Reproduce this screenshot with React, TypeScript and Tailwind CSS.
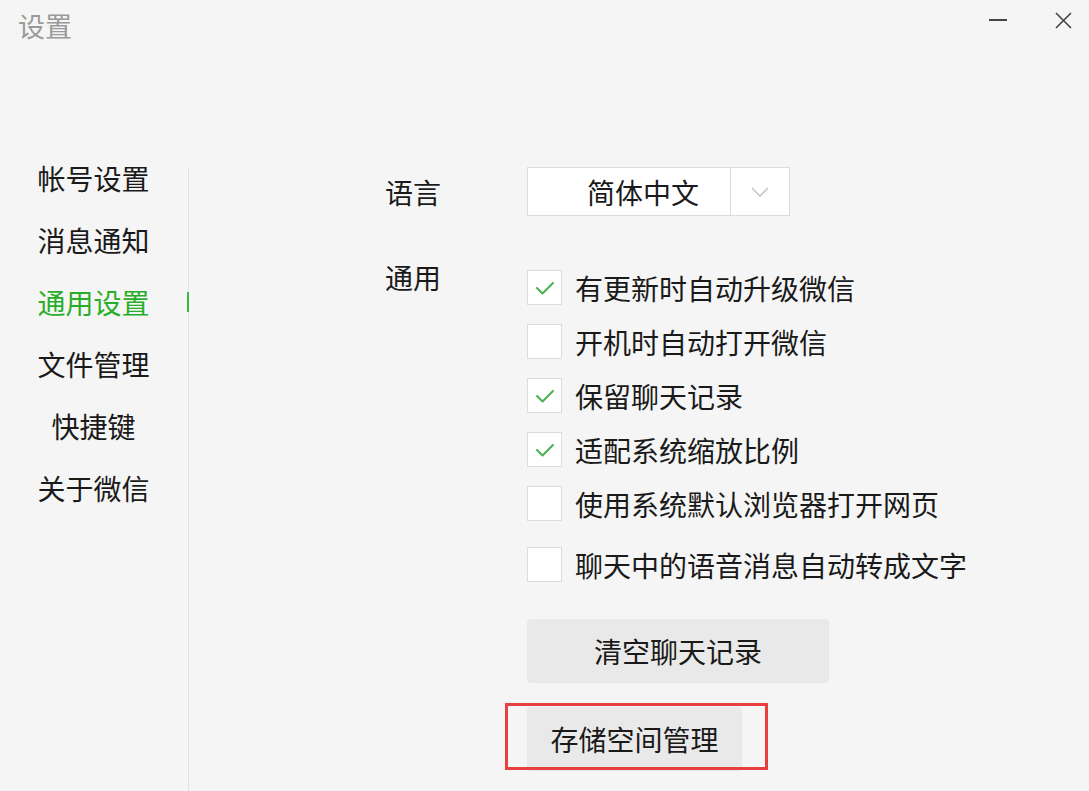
import { useState } from 'react';

const menu = ['帐号设置', '消息通知', '通用设置', '文件管理', '快捷键', '关于微信'];

const options = [
  { label: '有更新时自动升级微信', checked: true },
  { label: '开机时自动打开微信', checked: false },
  { label: '保留聊天记录', checked: true },
  { label: '适配系统缩放比例', checked: true },
  { label: '使用系统默认浏览器打开网页', checked: false },
  { label: '聊天中的语音消息自动转成文字', checked: false },
];

function Check({ on }: { on: boolean }) {
  return (
    <div className="w-[35px] h-[35px] shrink-0 bg-white border border-[#dcdcdc] flex items-center justify-center">
      {on && (
        <svg width="22" height="18" viewBox="0 0 22 18" fill="none">
          <path d="M3 9l5.5 5.5L19 4" stroke="#4caf50" strokeWidth="2" strokeLinecap="round" strokeLinejoin="round" />
        </svg>
      )}
    </div>
  );
}

export default function App() {
  const [active, setActive] = useState(2);
  const [opts, setOpts] = useState(options);

  const toggle = (i: number) => {
    setOpts(opts.map((o, j) => (j === i ? { ...o, checked: !o.checked } : o)));
  };

  return (
    <div
      className="w-[1089px] h-[791px] bg-[#f5f5f5] flex flex-col overflow-hidden text-[#1a1a1a]"
      style={{ fontFamily: '"Microsoft YaHei", "Noto Sans CJK SC", sans-serif' }}
    >
      {/* 标题栏 */}
      <div className="h-[149px] flex items-start justify-between shrink-0">
        <div className="pl-[18px] pt-[11px] text-[27px] leading-[30px] text-[#9a9a9a]">设置</div>
        <div className="flex items-start">
          <div className="w-[18px] h-[2px] bg-[#444] mt-[19px] mr-[48px]" />
          <svg className="mt-[12px] mr-[17px]" width="17" height="17" viewBox="0 0 17 17">
            <path d="M1 1l15 15M16 1L1 16" stroke="#444" strokeWidth="1.6" />
          </svg>
        </div>
      </div>

      <div className="flex flex-1 min-h-0">
        {/* 左侧菜单 */}
        <div className="w-[187px] shrink-0 flex flex-col -mt-[2px]">
          {menu.map((m, i) => (
            <div
              key={m}
              onClick={() => setActive(i)}
              className={`h-[62px] flex items-center justify-center text-[28px] leading-[30px] cursor-pointer ${
                i === active ? 'text-[#2aae2a]' : 'text-[#1a1a1a]'
              }`}
            >
              {m}
            </div>
          ))}
        </div>
        <div className="w-[2px] shrink-0 flex flex-col pt-[19px]">
          <div className="w-px h-[124px] bg-[#e2e2e2] ml-px" />
          <div className="w-[2px] h-[20px] bg-[#3bb73b]" />
          <div className="w-px flex-1 bg-[#e2e2e2] ml-px" />
        </div>

        {/* 右侧内容 */}
        <div className="flex flex-col pt-[18px] pl-[196px]">
          <div className="flex items-center">
            <div className="w-[142px] text-[28px] leading-[30px]">语言</div>
            <div className="w-[263px] h-[49px] bg-white border border-[#dcdcdc] flex">
              <div className="w-[202px] flex items-center pl-[59px] text-[28px] leading-[30px]">简体中文</div>
              <div className="flex-1 border-l border-[#dcdcdc] flex items-center justify-center">
                <svg width="20" height="12" viewBox="0 0 20 12" fill="none">
                  <path d="M2 2l8 8 8-8" stroke="#c8c8c8" strokeWidth="1.6" />
                </svg>
              </div>
            </div>
          </div>

          <div className="flex mt-[49px]">
            <div className="w-[142px] text-[28px] leading-[30px] -mt-[3px]">通用</div>
            <div className="flex flex-col pt-[5px]">
              {opts.map((o, i) => (
                <div
                  key={o.label}
                  onClick={() => toggle(i)}
                  className={`flex items-center cursor-pointer ${i === 5 ? 'mt-[26px]' : i > 0 ? 'mt-[19px]' : ''}`}
                >
                  <Check on={o.checked} />
                  <span className="ml-[13px] text-[28px] leading-[30px] whitespace-nowrap">{o.label}</span>
                </div>
              ))}

              <button className="mt-[37px] w-[302px] h-[64px] rounded bg-[#e9e9e9] text-[28px] leading-[30px] text-[#1a1a1a]">
                清空聊天记录
              </button>

              <div className="relative mt-[24px] w-[215px]">
                <button className="w-[215px] h-[64px] rounded bg-[#e9e9e9] text-[28px] leading-[30px] text-[#1a1a1a]">
                  存储空间管理
                </button>
                <div className="absolute left-[-22px] top-[-4px] w-[263px] h-[67px] border-[3px] border-[#e8403f] pointer-events-none" />
              </div>
            </div>
          </div>
        </div>
      </div>
    </div>
  );
}
